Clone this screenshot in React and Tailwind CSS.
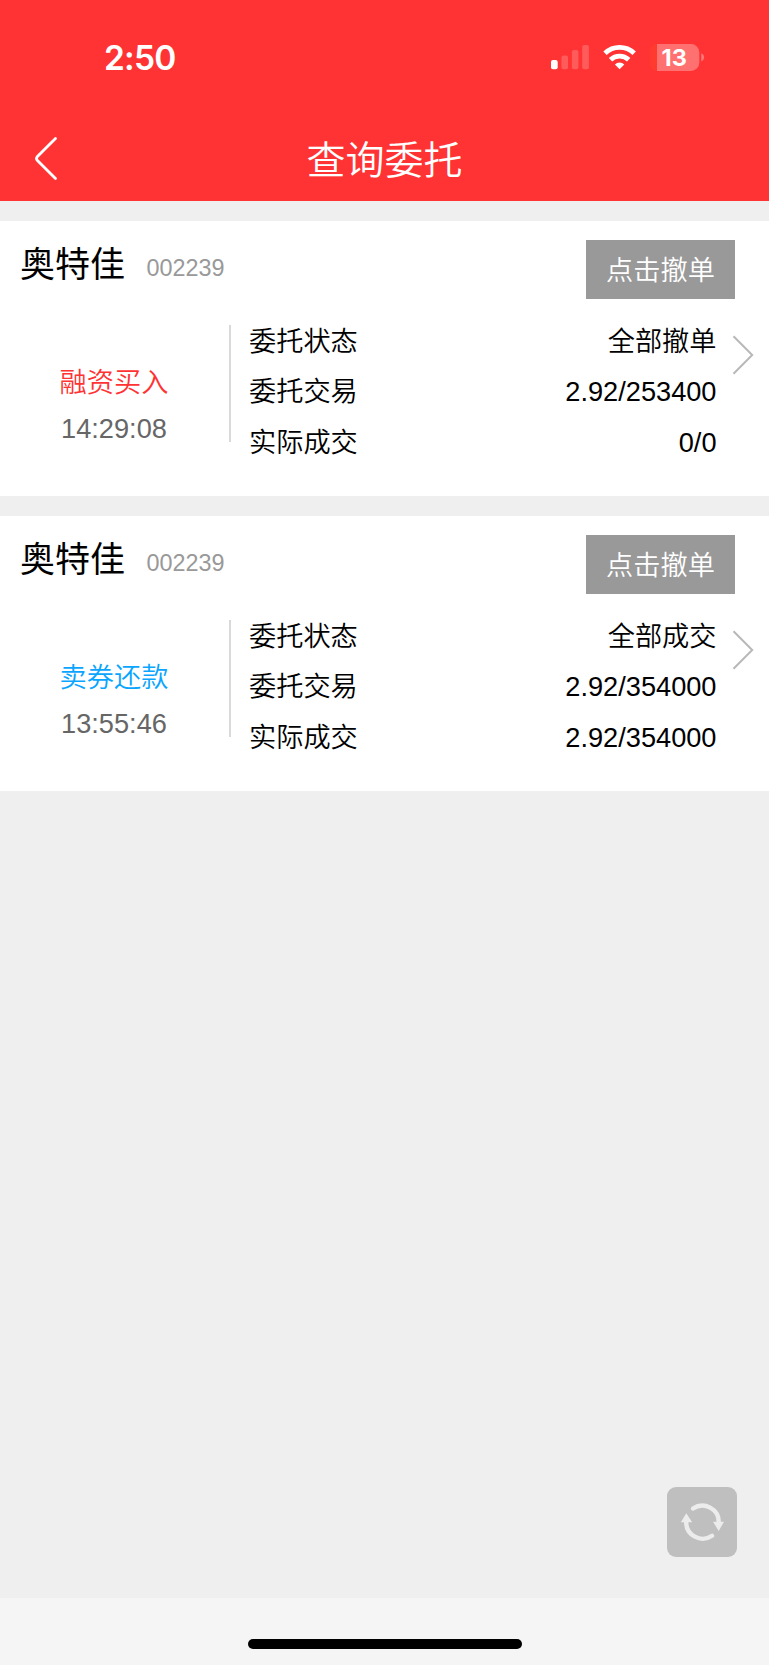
const CJK = "font-['Noto_Sans_CJK_SC',sans-serif]";

const orders = [
  {
    name: '奥特佳', code: '002239', side: '融资买入', sideColor: 'text-[#ff3333]', time: '14:29:08',
    rows: [['委托状态', '全部撤单', true], ['委托交易', '2.92/253400', false], ['实际成交', '0/0', false]],
  },
  {
    name: '奥特佳', code: '002239', side: '卖券还款', sideColor: 'text-[#0aa5ff]', time: '13:55:46',
    rows: [['委托状态', '全部成交', true], ['委托交易', '2.92/354000', false], ['实际成交', '2.92/354000', false]],
  },
];

function StatusBar() {
  return (
    <div className="flex h-[114px] items-start justify-between pt-[37px] pr-[63px] pl-[104px] text-white">
      <span className="mt-px font-['Inter',sans-serif] text-[33.5px] leading-[41px] font-semibold tracking-[-0.8px]">2:50</span>
      <svg className="mt-[-7px]" width="155" height="60" viewBox="0 0 155 60">
        <rect x="0" y="30" width="6.7" height="9.3" rx="2" fill="#fff" />
        <g fill="#fff" fillOpacity=".2">
          <rect x="10.5" y="25.4" width="6.5" height="13.9" rx="2" />
          <rect x="20.9" y="20" width="6.5" height="19.3" rx="2" />
          <rect x="31.2" y="15" width="6.7" height="24.3" rx="2" />
        </g>
        <g fill="none" stroke="#fff" strokeWidth="4.8">
          <path d="M54 23.2 A21.2 21.2 0 0 1 83.2 23.2" />
          <path d="M59.5 29.8 A13 13 0 0 1 77.7 29.8" />
        </g>
        <path d="M68.6 39.3 L63.9 34.5 A6.8 6.8 0 0 1 73.3 34.5 Z" fill="#fff" />
        <path d="M106 14 V41 A7 7 0 0 1 99 34 V21 A7 7 0 0 1 106 14Z" fill="#ff3b30" />
        <path d="M106 14 H140 A8.3 8.3 0 0 1 148.3 22.3 V32.7 A8.3 8.3 0 0 1 140 41 H106Z" fill="#fff" fillOpacity=".3" />
        <path d="M150.3 23.2 A4.5 4.5 0 0 1 150.3 31.5Z" fill="#fff" fillOpacity=".35" />
        <text x="123.2" y="35.6" textAnchor="middle" fill="#fff" className="font-['Inter',sans-serif] text-[23.5px] font-bold">13</text>
      </svg>
    </div>
  );
}

function Order({ order }) {
  return (
    <section className="mb-[20px] h-[275px] bg-white pt-[19px]">
      <div className="flex h-[59px] justify-between pr-[34px] pl-[20px]">
        <div className="flex">
          <h2 className={CJK + ' mt-[-1px] text-[35px] leading-[46px] text-black'}>{order.name}</h2>
          <span className="mt-[14px] ml-[21.5px] text-[23.4px] leading-[28px] text-[#999999]">{order.code}</span>
        </div>
        <button className={CJK + ' h-[59px] w-[149px] bg-[#999999] pb-[2px] text-[27.2px] leading-[57px] font-[350] text-white'}>点击撤单</button>
      </div>
      <div className="flex pt-[17px]">
        <div className="flex w-[228px] flex-col items-center pt-[47px]">
          <span className={CJK + ' text-[27.2px] leading-[34px] font-[350] ' + order.sideColor}>{order.side}</span>
          <span className="mt-[16px] text-[27.2px] leading-[32px] text-[#666666]">{order.time}</span>
        </div>
        <div className="mt-[9px] ml-px h-[117px] w-[2px] bg-[#d9d9d9]" />
        <dl className="ml-[18px] w-[467.5px]">
          {order.rows.map(([label, value, cjk]) => (
            <div key={label} className="flex h-[50.8px] justify-between text-[27.2px] leading-[50px] text-black">
              <dt className={CJK + ' mt-[-2.5px] font-[350]'}>{label}</dt>
              <dd className={cjk ? CJK + ' mt-[-2.5px] font-[350]' : 'mt-0'}>{value}</dd>
            </div>
          ))}
        </dl>
        <svg className="mt-[18px] ml-[14.5px]" width="26" height="42" viewBox="0 0 26 42" fill="none" stroke="#b8b8b8" strokeWidth="2">
          <path d="M2.5 2.3 L21.2 21 L2.5 39.7" />
        </svg>
      </div>
    </section>
  );
}

export default function App() {
  return (
    <div className="flex h-[1665px] w-[769px] flex-col overflow-hidden bg-[#efefef] font-['Liberation_Sans','Noto_Sans_CJK_SC',sans-serif]">
      <header className="mb-[20px] h-[201px] shrink-0 bg-[#ff3333]">
        <StatusBar />
        <div className="grid h-[87px] grid-cols-[100px_1fr_100px] items-start">
          <svg className="mt-[22px] ml-[33px]" width="28" height="46" viewBox="0 0 28 46" fill="none" stroke="#fff" strokeWidth="2.8" strokeLinecap="round" strokeLinejoin="round">
            <path d="M22.5 2.5 L4.2 20.8 Q2.8 22.5 4.2 24.2 L22.5 42.5" />
          </svg>
          <h1 className={CJK + ' mt-[14px] text-center text-[39px] leading-[58px] font-[350] text-white'}>查询委托</h1>
        </div>
      </header>
      <main className="grow">
        {orders.map((o) => <Order key={o.time} order={o} />)}
      </main>
      <div className="flex justify-end pr-[32px] pb-[41px]">
        <button className="flex h-[70px] w-[70px] items-center justify-center rounded-[9px] bg-[#bfbfbf]">
          <svg width="70" height="70" viewBox="0 0 70 70">
            <g fill="none" stroke="#ececec" strokeWidth="4.4" strokeLinecap="round">
              <path d="M26 21.5 A16.5 16.5 0 0 1 51.8 35.5" />
              <path d="M45 48.8 A16.5 16.5 0 0 1 19.2 34.8" />
            </g>
            <path d="M46 34.7 H57 L51.7 44 Z M13.8 35.2 H25.2 L19.3 26.2 Z" fill="#ececec" />
          </svg>
        </button>
      </div>
      <footer className="flex h-[67px] shrink-0 justify-center bg-[#f5f5f5] pt-[41px]">
        <div className="h-[10px] w-[274px] rounded-full bg-black" />
      </footer>
    </div>
  );
}
